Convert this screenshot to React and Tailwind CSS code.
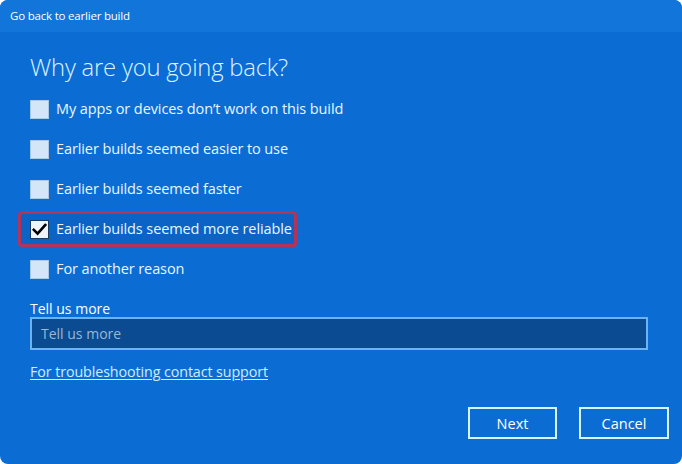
import React from "react";

const font = { fontFamily: '"Open Sans", "Noto Sans", sans-serif' };

function Box({ checked }) {
  return checked ? (
    <div className="w-[19px] h-[19px] bg-[#eef4fb] border border-[#1b3a66] flex items-center justify-center shrink-0">
      <svg width="15" height="13" viewBox="0 0 15 13">
        <path d="M1.8 6.8 L5.6 10.6 L13.2 2" fill="none" stroke="#000" strokeWidth="2.6" strokeLinecap="square" />
      </svg>
    </div>
  ) : (
    <div className="w-[19px] h-[19px] bg-[#d3e6f8] border border-[#a9c9ea] shrink-0" />
  );
}

function Row({ label, checked }) {
  return (
    <div className="flex items-center h-[40px] gap-[7px]">
      <Box checked={checked} />
      <span className="text-[14.5px] text-[#e9f6ff] tracking-[-0.1px] whitespace-nowrap">{label}</span>
    </div>
  );
}

export default function App() {
  return (
    <div className="w-[682px] h-[464px] bg-white" style={font}>
      <div className="w-full h-full rounded-[8px] overflow-hidden flex flex-col bg-[#0b6dd4]">
        <div className="h-[32px] bg-[#1175d9] flex items-center pl-[10px]">
          <span className="text-[11.5px] text-white tracking-[-0.2px]">Go back to earlier build</span>
        </div>
        <div className="flex flex-col px-[30px] pt-[20px]">
          <h1 className="text-[23.8px] font-light text-[#dff3ff] leading-[30px] tracking-[-0.2px]">Why are you going back?</h1>
          <div className="flex flex-col mt-[7px]">
            <Row label="My apps or devices don’t work on this build" />
            <Row label="Earlier builds seemed easier to use" />
            <Row label="Earlier builds seemed faster" />
            <div className="-ml-[12px] pl-[9px] border-[3px] border-[#b23459] rounded-[4px] bg-[#0b63c6] w-[279px] h-[36px] flex items-center my-[2px]">
              <div className="flex items-center gap-[7px] whitespace-nowrap">
                <Box checked />
                <span className="text-[14.5px] text-[#e9f6ff] tracking-[-0.1px]">Earlier builds seemed more reliable</span>
              </div>
            </div>
            <Row label="For another reason" />
          </div>
          <div className="mt-[11px] text-[14px] text-white leading-[18px]">Tell us more</div>
          <div className="mt-[-1px] w-[618px] h-[33px] bg-[#0a4b91] border-2 border-[#6bb3f2] flex items-center pl-[9px]">
            <span className="text-[14px] text-[#9ab8d6]">Tell us more</span>
          </div>
          <a className="mt-[11px] text-[14.3px] text-[#cdeeff] underline underline-offset-2 w-fit tracking-[-0.1px]">For troubleshooting contact support</a>
          <div className="flex justify-end gap-[22px] mt-[25px] mr-[-17px]">
            <button className="w-[89px] h-[32px] border-2 border-[#d6f4ff] text-[14.5px] text-white">Next</button>
            <button className="w-[90px] h-[32px] border-2 border-[#d6f4ff] text-[14.5px] text-white">Cancel</button>
          </div>
        </div>
      </div>
    </div>
  );
}
